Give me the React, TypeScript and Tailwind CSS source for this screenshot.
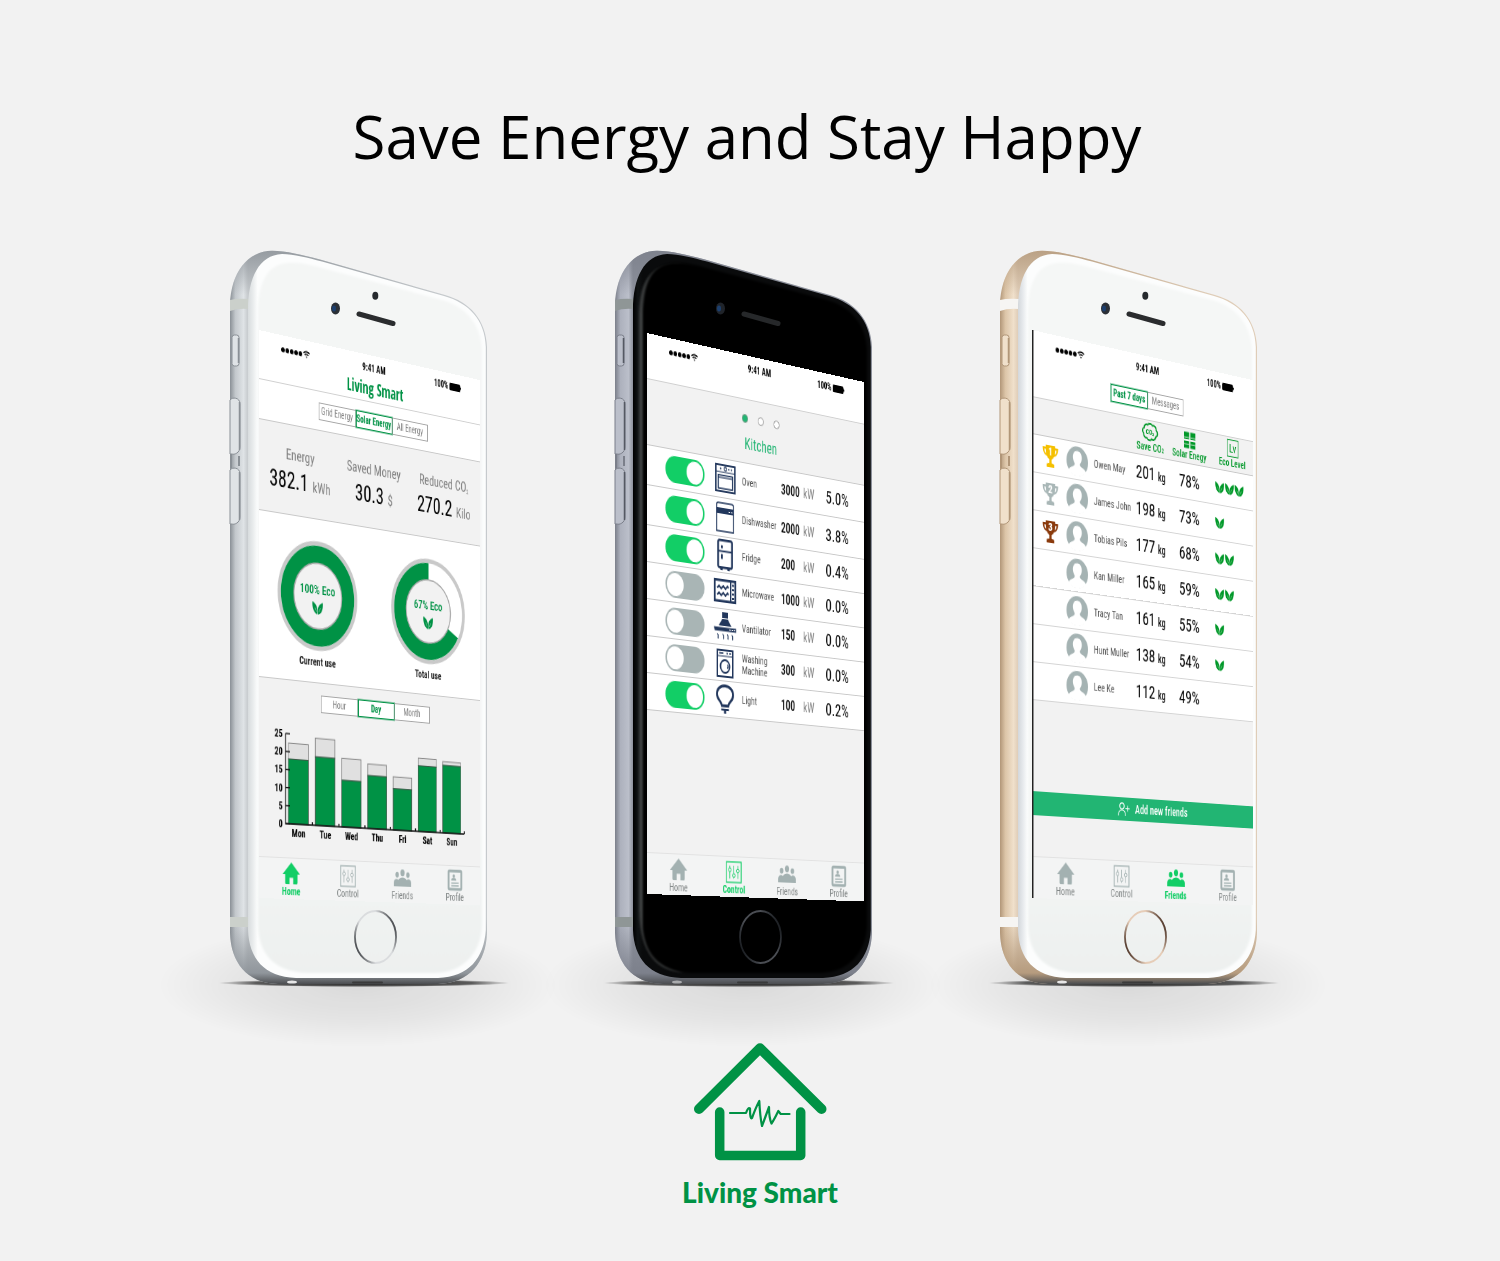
import { ReactNode, useState } from 'react';

type IconProps = { className?: string };

/* ---------- shared icons ---------- */

function Leaf({ className }: IconProps) {
  return (
    <svg viewBox="0 0 20 18" className={className} fill="currentColor" aria-hidden="true">
      <path d="M0 0C6 2 10.500 6 9.500 17.500 3 16.500-1 9 0 0Z" />
      <path d="M20 .5C21 10 17.500 17 10.700 17.500 8.500 8 13 3 20 .5Z" />
      <path d="M5 8.500 8 14M15.500 8.500 12.300 14" stroke="#fff" strokeOpacity=".6" strokeWidth="1" fill="none" />
    </svg>
  );
}

function HomeIcon({ className }: IconProps) {
  return (
    <svg viewBox="0 0 24 22" className={className} fill="currentColor" aria-hidden="true">
      <path d="M12 0 24 12h-3.500v8.500q0 1.500-1.500 1.500h-4.500v-6.500h-5V22H5q-1.500 0-1.500-1.500V12H0Z" />
    </svg>
  );
}

function ControlIcon({ className }: IconProps) {
  return (
    <svg viewBox="0 0 24 24" className={className} fill="none" stroke="currentColor" aria-hidden="true">
      <rect x="1" y="1" width="22" height="22" strokeWidth="1.300" />
      <path d="M6 5v2.500M6 11.500V19M12 5v8.500M12 17.500V19M18 5v3.500M18 12.500V19" />
      <circle cx="6" cy="9.500" r="2" />
      <circle cx="12" cy="15.500" r="2" />
      <circle cx="18" cy="10.500" r="2" />
    </svg>
  );
}

function FriendsIcon({ className }: IconProps) {
  return (
    <svg viewBox="0 0 26 18" className={className} fill="currentColor" aria-hidden="true">
      <ellipse cx="13" cy="3.600" rx="3.100" ry="3.600" />
      <ellipse cx="5" cy="5.800" rx="2.600" ry="3" />
      <ellipse cx="21" cy="5.800" rx="2.600" ry="3" />
      <path d="M0 18v-4c0-2.500 2-3.800 4-3.800 1.200 0 2.200.4 2.800 1C8.300 9.400 10.500 8.500 13 8.500s4.700.9 6.200 2.700c.6-.6 1.600-1 2.800-1 2 0 4 1.300 4 3.800v4Z" />
    </svg>
  );
}

function ProfileIcon({ className }: IconProps) {
  return (
    <svg viewBox="0 0 24 24" className={className} fill="currentColor" aria-hidden="true">
      <rect x="1.800" y="1.800" width="20.400" height="20.400" rx="1.500" fill="none" stroke="currentColor" strokeWidth="3" />
      <circle cx="10" cy="7.500" r="2" />
      <path d="M6 12.500c0-2 1.500-3 4-3s4 1 4 3ZM6 14.500h12V16H6ZM6 17.500h12V19H6Z" />
    </svg>
  );
}

function WifiIcon({ className }: IconProps) {
  return (
    <svg viewBox="0 0 12 9" className={className} fill="none" stroke="currentColor" aria-hidden="true">
      <path d="M.8 3.400C3.800.4 8.200.4 11.200 3.400" strokeWidth="1.600" />
      <path d="M3 5.600c1.700-1.700 4.300-1.700 6 0" strokeWidth="1.500" />
      <path d="M6 9 4.400 7.200h3.200Z" fill="currentColor" stroke="none" />
    </svg>
  );
}

/* ---------- appliance icons ---------- */

function OvenIcon() {
  return (
    <svg viewBox="0 0 30 30" className="h-[29px] w-[29px]" fill="none" stroke="currentColor" aria-hidden="true">
      <rect x="1" y="1" width="28" height="28" strokeWidth="2" />
      <path d="M1 8.500h28" strokeWidth="1" />
      <rect x="4.500" y="12" width="21" height="14" strokeWidth="1.500" />
      <path d="M5 14.500h20" strokeWidth="1.200" />
      <circle cx="8" cy="5" r="1" fill="currentColor" stroke="none" />
      <circle cx="15" cy="5" r="1.900" strokeWidth="1.300" />
      <circle cx="20" cy="5" r="1" fill="currentColor" stroke="none" />
      <circle cx="24" cy="5" r="1" fill="currentColor" stroke="none" />
    </svg>
  );
}

function DishwasherIcon() {
  return (
    <svg viewBox="0 0 26 31" className="h-[31px] w-[26px]" fill="none" stroke="currentColor" aria-hidden="true">
      <path d="M1 30V3.500Q1 1 3.500 1h19Q25 1 25 3.500V30Z" strokeWidth="1.600" />
      <path d="M1 6h24v6H1Z" fill="currentColor" stroke="none" />
      <path d="M18 9.500h2M21.500 9.500h2" stroke="#fff" strokeWidth="1.200" />
    </svg>
  );
}

function FridgeIcon() {
  return (
    <svg viewBox="0 0 22 32" className="h-8 w-[22px]" fill="none" stroke="currentColor" aria-hidden="true">
      <rect x="1.200" y="1.200" width="19.600" height="28" rx="2" strokeWidth="2.400" />
      <path d="M1 12.500h20" strokeWidth="1.800" />
      <path d="M5 6.500h2.800v3H5ZM5 15.500h2.800v5H5ZM4 29h4l-.5 3h-3ZM14 29h4l-.5 3h-3Z" fill="currentColor" stroke="none" />
    </svg>
  );
}

function MicrowaveIcon() {
  return (
    <svg viewBox="0 0 32 24" className="h-6 w-8" fill="none" stroke="currentColor" aria-hidden="true">
      <rect x="1.300" y="1.300" width="29.400" height="21.400" strokeWidth="2.600" />
      <path d="M24 1v22" strokeWidth="2" />
      <path d="M5 9.500 7.500 7l3 3 3-3 3 3 3-3 1.500 1.500M5 16.500 7.500 14l3 3 3-3 3 3 3-3 1.500 1.500" strokeWidth="1.900" />
      <path d="M27.500 4.500v2M27.500 9v2M27.500 13.500v2M27.500 18v2" strokeWidth="3" />
    </svg>
  );
}

function FanIcon() {
  return (
    <svg viewBox="0 0 32 31" className="h-[31px] w-8" fill="none" stroke="currentColor" aria-hidden="true">
      <path d="M12 0h8v6h-8ZM12 7h8l5 7H7ZM0 15.500h32v4H1.500Z" fill="currentColor" stroke="none" />
      <path d="M22 17.500h2M25.500 17.500h2M29 17.500h1.500" stroke="#fff" strokeWidth="1" />
      <path d="M5 22.500c3 1.500 0 3 1.500 5M12.500 22.500c3 1.500 0 3 1.500 5M19 22.500c3 1.500 0 3 1.500 5M25.500 22.500c3 1.500 0 3 1.500 5" strokeWidth="1.300" />
    </svg>
  );
}

function WasherIcon() {
  return (
    <svg viewBox="0 0 24 29" className="h-[29px] w-6" fill="none" stroke="currentColor" aria-hidden="true">
      <rect x="1" y="1" width="22" height="27" strokeWidth="2" />
      <path d="M1 7h22" strokeWidth="1" />
      <path d="M3.500 4h6M14 4h2M18 4h2.500" strokeWidth="1.500" />
      <ellipse cx="12" cy="17.500" rx="6.500" ry="6.500" strokeWidth="2" />
      <path d="M15.500 15.500q1.500 2-.2 4" strokeWidth="1.200" />
    </svg>
  );
}

function BulbIcon() {
  return (
    <svg viewBox="0 0 28 30" className="h-[30px] w-7" fill="none" stroke="currentColor" aria-hidden="true">
      <path d="M14 1.500c7 0 11.500 4 11.500 9 0 6-6.500 6.500-7 11.500h-9c-.5-5-7-5.500-7-11.500 0-5 4.500-9 11.500-9Z" strokeWidth="2.800" />
      <path d="M8.500 25h11v2h-4v3h-3v-3h-4Z" fill="currentColor" stroke="none" />
    </svg>
  );
}

/* ---------- friends icons ---------- */

function Trophy({ place, className }: { place: number; className: string }) {
  return (
    <svg viewBox="0 0 20 21" className={className} aria-label={`Place ${place}`} role="img">
      <path d="M4 0h12v2h4c0 5-2 8-5.500 8.500-.8 1.800-2 2.500-3 2.800V17l3.500.8V21H5v-3.200L8.500 17v-3.700c-1-.3-2.200-1-3-2.800C2 10 0 7 0 2h4Zm0 4H2c.3 2 1 3.500 2.500 4.200Zm12 0-.5 4.200C17 7.500 17.700 6 18 4Z" fill="currentColor" />
      <text x="10" y="10" textAnchor="middle" fontSize="11" fontWeight="800" fill="#fff">
        {place}
      </text>
    </svg>
  );
}

function Avatar() {
  return (
    <svg viewBox="0 0 30 30" className="h-[30px] w-[30px]" aria-hidden="true">
      <circle cx="15" cy="15" r="15" fill="#a5b3b3" />
      <path d="M15 4.500c4.500 0 6.500 3.500 6.100 7.500-.3 2.600-1.600 4.500-2.500 5.500 0 1.800.9 2.500 3.400 3.400 2.700 1 4.500 2 5 4.100A15 15 0 0 1 15 30 15 15 0 0 1 3 25c.5-2.100 2.300-3.100 5-4.100 2.500-.9 3.400-1.600 3.400-3.400-.9-1-2.200-2.900-2.500-5.500-.4-4 1.600-7.500 6.100-7.500Z" fill="#fff" />
    </svg>
  );
}

function CloudIcon() {
  return (
    <svg viewBox="0 0 24 20" className="h-5 w-6" aria-hidden="true">
      <path d="M8 2.500c2-2.500 6-2 7 0 3-1 6 1 5.500 4 3 2 2.500 6-.5 7-.5 3-4 4.500-6 3-2 2.500-6 2-7-.5-3 .5-5-1.500-4.500-4C-.2 10 .5 6.500 3 6 3 3 5.500 1.500 8 2.500Z" fill="none" stroke="currentColor" strokeWidth="1.700" />
      <text x="11.500" y="12.500" textAnchor="middle" fontSize="8" fontWeight="700" fill="currentColor">
        CO₂
      </text>
    </svg>
  );
}

function SolarIcon() {
  return (
    <svg viewBox="0 0 18 18" className="h-[18px] w-[17px]" fill="currentColor" aria-hidden="true">
      <path d="M0 0h8v8H0ZM10 0h8v8h-8ZM0 10h8v8H0ZM10 10h8v8h-8Z" />
      <path d="M0 6h8M10 6h8M0 13.500h8M10 13.500h8" stroke="#f2f2f2" strokeWidth=".8" />
    </svg>
  );
}

function LevelIcon() {
  return (
    <svg viewBox="0 0 18 19" className="h-[19px] w-[18px]" aria-hidden="true">
      <rect x=".6" y=".6" width="16.800" height="17.800" fill="none" stroke="currentColor" strokeWidth="1" />
      <text x="9" y="14" textAnchor="middle" fontSize="13" fill="currentColor">
        Lv
      </text>
    </svg>
  );
}

function AddUserIcon() {
  return (
    <svg viewBox="0 0 17 14" className="h-[14px] w-[17px]" fill="none" stroke="currentColor" strokeWidth="1.200" aria-hidden="true">
      <circle cx="6" cy="4" r="3.200" />
      <path d="M1 14c0-3 1.500-6 5-6s5 3 5 6M11 6.500h6M14 3.500v6" />
    </svg>
  );
}

/* ---------- screen parts ---------- */

function StatusBar() {
  return (
    <div className="grid grid-cols-3 items-center px-[30px] pt-2 text-[10px] leading-3 font-bold text-black">
      <span className="flex items-center gap-px">
        {[0, 1, 2, 3, 4].map((n) => (
          <span key={n} className="size-[5px] rounded-full bg-black" />
        ))}
        <WifiIcon className="h-2 w-[10px]" />
      </span>
      <span className="text-center whitespace-nowrap">9:41 AM</span>
      <span className="flex items-center justify-end gap-0.5">
        100%
        <svg viewBox="0 0 18 8" className="h-2 w-[18px]" aria-hidden="true">
          <path d="M1.500 0H15q1.500 0 1.500 1.500v1Q18 2.500 18 4t-1.500 1.500v1Q16.500 8 15 8H1.500Q0 8 0 6.500v-5Q0 0 1.500 0Z" />
        </svg>
      </span>
    </div>
  );
}

function Segments({ items, initial, label }: { items: string[]; initial: number; label: string }) {
  const [active, setActive] = useState(initial);
  return (
    <div className="flex justify-center" role="group" aria-label={label}>
      {items.map((item, n) => (
        <button
          key={item}
          type="button"
          aria-pressed={n === active}
          onClick={() => setActive(n)}
          className={
            n === active
              ? 'h-[18px] w-[53px] border border-[#009245] bg-white text-[10px] leading-4 font-bold whitespace-nowrap text-[#009245] outline outline-[#009245]/40'
              : 'h-[18px] w-[53px] border border-[#a6a6a6] bg-white text-[10px] leading-4 whitespace-nowrap text-[#808080]'
          }
        >
          {item}
        </button>
      ))}
    </div>
  );
}

const tabs = [
  { name: 'Home', Icon: HomeIcon, size: 'h-[22px] w-[26px]' },
  { name: 'Control', Icon: ControlIcon, size: 'h-[23px] w-[23px]' },
  { name: 'Friends', Icon: FriendsIcon, size: 'h-[18px] w-[26px]' },
  { name: 'Profile', Icon: ProfileIcon, size: 'h-[24px] w-[23px]' },
];

function TabBar({ active }: { active: string }) {
  return (
    <nav className="mt-auto grid h-[42px] grid-cols-4 border-t border-[#e2e2e2] bg-[#f3f4f4] pl-1">
      {tabs.map(({ name, Icon, size }) => (
        <a key={name} href={`#${name.toLowerCase()}`} className="flex flex-col items-center pt-0.5">
          <span className={`flex h-[26px] items-center ${name === active ? 'text-[#12ce66]' : 'text-[#a3b1b1]'}`}>
            <Icon className={size} />
          </span>
          <span className={`text-[11px] leading-3 ${name === active ? 'font-bold text-[#12ce66]' : 'text-[#808585]'}`}>
            {name}
          </span>
        </a>
      ))}
    </nav>
  );
}

/* ---------- home screen ---------- */

function Donut({ percent, caption }: { percent: number; caption: string }) {
  const length = 2 * Math.PI * 42;
  return (
    <figure className="flex flex-col items-center">
      <div className="relative size-28">
        <svg viewBox="0 0 112 112" className="size-28" aria-hidden="true">
          <circle cx="56" cy="56" r="53.500" fill="#fff" stroke="#c9c9c9" strokeWidth="4.500" />
          <circle
            cx="56"
            cy="56"
            r="42"
            fill="none"
            stroke="#009245"
            strokeWidth="18.500"
            strokeDasharray={`${(length * percent) / 100} ${length}`}
            transform="rotate(-90 56 56) scale(1 -1) translate(0 -112)"
          />
          <circle cx="56" cy="56" r="33.500" fill="#f2f2f2" stroke="#a8a8a8" strokeWidth="1.500" />
        </svg>
        <div className="absolute inset-0 flex flex-col items-center justify-center gap-1 pt-1 text-[13px] leading-4 font-medium text-[#009245]">
          {percent}% Eco
          <Leaf className="h-[13px] w-[19px]" />
        </div>
      </div>
      <figcaption className="mt-1 text-[11px] leading-4 font-bold text-[#222]">{caption}</figcaption>
    </figure>
  );
}

const week = [
  { day: 'Mon', total: 22.4, green: 18 },
  { day: 'Tue', total: 24.4, green: 19.2 },
  { day: 'Wed', total: 19.4, green: 13.2 },
  { day: 'Thu', total: 18.4, green: 15.1 },
  { day: 'Fri', total: 15.3, green: 11.9 },
  { day: 'Sat', total: 21.3, green: 19.1 },
  { day: 'Sun', total: 20.9, green: 19.8 },
];

function WeekChart() {
  const scale = 91 / 25;
  const pitch = 261 / 7;
  return (
    <svg viewBox="0 0 322 122" className="w-full" role="img" aria-label="Energy use by day" fontSize="11" fontWeight="700">
      {week.map((d, n) => {
        const x = 40 + n * pitch;
        return (
          <g key={d.day}>
            <rect x={x} y={101 - d.total * scale} width="27.500" height={(d.total - d.green) * scale} fill="#e0e0e0" stroke="#888" />
            <rect x={x} y={101 - d.green * scale} width="27.500" height={d.green * scale} fill="#009245" stroke="#3c5a48" />
            <path d={`M${36 + (n + 1) * pitch} 101v-3`} stroke="#000" strokeWidth="1.500" />
            <text x={x + 14} y="114" textAnchor="middle">
              {d.day}
            </text>
          </g>
        );
      })}
      <path d="M36 10V101H297" fill="none" stroke="#111" strokeWidth="1.300" />
      {[0, 5, 10, 15, 20, 25].map((v) => (
        <g key={v}>
          <path d={`M36 ${101 - v * scale}h6`} stroke="#111" strokeWidth="1.300" />
          <text x="32" y={105 - v * scale} textAnchor="end">
            {v}
          </text>
        </g>
      ))}
    </svg>
  );
}

function Metric({ label, value, unit }: { label: ReactNode; value: string; unit: string }) {
  return (
    <div className="flex flex-col items-center whitespace-nowrap">
      <dt className="text-[15px] leading-6 text-[#808080]">{label}</dt>
      <dd className="text-[24px] leading-7 text-black">
        {value} <span className="text-[15px] text-[#808080]">{unit}</span>
      </dd>
    </div>
  );
}

function HomeScreen() {
  return (
    <>
      <header className="h-[49px] border-b border-[#d0d0d0] bg-white">
        <StatusBar />
        <h2 className="mt-1 pl-1 text-center font-['Open_Sans_Condensed','Roboto_Condensed',sans-serif] text-[17px] leading-[22px] font-extrabold text-[#009245]">
          Living Smart
        </h2>
      </header>
      <div className="h-10 border-b border-[#c8c8c8] bg-white pt-[11px]">
        <Segments label="Energy source" items={['Grid Energy', 'Solar Energy', 'All Energy']} initial={1} />
      </div>
      <dl className="grid h-[91px] grid-cols-3 border-b border-[#c8c8c8] px-1 pt-[18px]">
        <Metric label="Energy" value="382.1" unit="kWh" />
        <Metric label="Saved Money" value="30.3" unit="$" />
        <Metric
          label={
            <>
              Reduced CO<sub className="text-[7px]">2</sub>
            </>
          }
          value="270.2"
          unit="Kilo"
        />
      </dl>
      <div className="grid h-[167px] grid-cols-2 border-b border-[#c8c8c8] bg-white pt-[22px]">
        <Donut percent={100} caption="Current use" />
        <Donut percent={67} caption="Total use" />
      </div>
      <div className="pt-3">
        <div className="pl-1.5">
          <Segments label="Period" items={['Hour', 'Day', 'Month']} initial={1} />
        </div>
        <div className="mt-3.5">
          <WeekChart />
        </div>
      </div>
      <TabBar active="Home" />
    </>
  );
}

/* ---------- control screen ---------- */

const appliances = [
  { name: 'Oven', power: 3000, share: '5.0%', on: true, Icon: OvenIcon, row: 'h-10' },
  { name: 'Dishwasher', power: 2000, share: '3.8%', on: true, Icon: DishwasherIcon, row: 'h-10' },
  { name: 'Fridge', power: 200, share: '0.4%', on: true, Icon: FridgeIcon, row: 'h-[37px]' },
  { name: 'Microwave', power: 1000, share: '0.0%', on: false, Icon: MicrowaveIcon, row: 'h-[37px]' },
  { name: 'Vantilator', power: 150, share: '0.0%', on: false, Icon: FanIcon, row: 'h-[37px]' },
  { name: 'Washing Machine', power: 300, share: '0.0%', on: false, Icon: WasherIcon, row: 'h-[37px]' },
  { name: 'Light', power: 100, share: '0.2%', on: true, Icon: BulbIcon, row: 'h-[37px]' },
];

function ControlScreen() {
  return (
    <>
      <header className="h-[46px] border-b border-[#d0d0d0] bg-white">
        <StatusBar />
      </header>
      <div className="flex h-[66px] flex-col items-center border-b border-[#c8c8c8] pt-[15px] pl-1">
        <div className="flex gap-[14px]">
          <span className="size-[9px] rounded-full border border-[#7d9a8a] bg-[#22b573]" />
          <span className="size-[9px] rounded-full border border-[#999] bg-white" />
          <span className="size-[9px] rounded-full border border-[#999] bg-white" />
        </div>
        <h2 className="mt-3 text-[16px] leading-5 text-[#22b573]">Kitchen</h2>
      </div>
      <ul>
        {appliances.map(({ name, power, share, on, Icon, row }) => (
          <li key={name} className={`${row} border-b border-[#c8c8c8] bg-white`}>
            <label className="flex h-full items-center pl-[25px]">
              <input
                type="checkbox"
                role="switch"
                defaultChecked={on}
                className="relative h-[27px] w-[54px] shrink-0 appearance-none rounded-full bg-[#a9b5b5] before:absolute before:top-0.5 before:left-0.5 before:size-[23px] before:rounded-full before:bg-white checked:bg-[#12ce66] checked:before:left-[29px]"
              />
              <span className="ml-[11px] flex w-9 shrink-0 justify-center text-[#22375c]">
                <Icon />
              </span>
              <span className="ml-1.5 w-[57px] text-[11px] leading-3 text-[#4d4d4d]">{name}</span>
              <span className="w-[33px] text-[14px] leading-5 font-medium text-black">{power}</span>
              <span className="w-[34px] text-[14px] leading-5 text-[#808080]">kW</span>
              <span className="text-[19px] leading-6 text-black">{share}</span>
            </label>
          </li>
        ))}
      </ul>
      <TabBar active="Control" />
    </>
  );
}

/* ---------- friends screen ---------- */

const friends = [
  { name: 'Owen May', saved: 201, solar: 78, level: 3 },
  { name: 'James John', saved: 198, solar: 73, level: 1 },
  { name: 'Tobias Pils', saved: 177, solar: 68, level: 2 },
  { name: 'Kan Miller', saved: 165, solar: 59, level: 2 },
  { name: 'Tracy Tan', saved: 161, solar: 55, level: 1 },
  { name: 'Hunt Muller', saved: 138, solar: 54, level: 1 },
  { name: 'Lee Ke', saved: 112, solar: 49, level: 0 },
];

const medals = ['h-[22px] w-[22px] text-[#f5c000]', 'h-[22px] w-[22px] text-[#a9b7b7]', 'h-[22px] w-[22px] text-[#8a3a0c]'];

function Heading({ icon, children }: { icon: ReactNode; children: ReactNode }) {
  return (
    <span className="flex flex-col items-center">
      <span className="flex h-[19px] items-center">{icon}</span>
      <span className="text-[11px] leading-[14px] font-medium whitespace-nowrap">{children}</span>
    </span>
  );
}

function FriendsScreen() {
  return (
    <>
      <header className="h-[67px] border-b border-[#d0d0d0] bg-white">
        <StatusBar />
        <div className="mt-[17px]">
          <Segments label="View" items={['Past 7 days', 'Messages']} initial={0} />
        </div>
      </header>
      <table className="w-full table-fixed border-collapse">
        <thead>
          <tr className="h-9 border-b border-[#c8c8c8] align-top text-[#009828]">
            <th className="w-[41px] p-0" aria-label="Rank" />
            <th className="w-[36px] p-0" aria-label="Photo" />
            <th className="w-[62px] p-0" aria-label="Name" />
            <th className="w-[50px] p-0 pt-0.5 font-normal">
              <Heading icon={<CloudIcon />}>
                Save CO<span className="text-[7px]">2</span>
              </Heading>
            </th>
            <th className="w-[66px] p-0 pt-0.5 font-normal">
              <Heading icon={<SolarIcon />}>Solar Enegy</Heading>
            </th>
            <th className="p-0 pt-0.5 font-normal">
              <Heading icon={<LevelIcon />}>Eco Level</Heading>
            </th>
          </tr>
        </thead>
        <tbody>
          {friends.map((f, n) => (
            <tr key={f.name} className="h-[38px] border-b border-[#d4d4d4] bg-white">
              <td className="p-0 pl-3">{n < 3 && <Trophy place={n + 1} className={medals[n]} />}</td>
              <td className="p-0 pl-1">
                <Avatar />
              </td>
              <td className="p-0 pl-1.5 text-[11px] leading-4 whitespace-nowrap text-[#4d4d4d]">{f.name}</td>
              <td className="p-0 pl-1 text-[19px] leading-6 whitespace-nowrap text-black">
                {f.saved}
                <span className="ml-1 text-[12px] font-medium">kg</span>
              </td>
              <td className="p-0 text-center text-[19px] leading-6 text-black">{f.solar}%</td>
              <td className="p-0 pl-1.5">
                <span className="flex gap-px text-[#009828]" role="img" aria-label={`Level ${f.level}`}>
                  {Array.from({ length: f.level }, (_, k) => (
                    <Leaf key={k} className="h-3 w-[14px]" />
                  ))}
                </span>
              </td>
            </tr>
          ))}
        </tbody>
      </table>
      <button type="button" className="mt-[91px] flex h-6 items-center justify-center gap-2 bg-[#22b573] pl-4 text-[12px] leading-4 font-medium text-white">
        <AddUserIcon />
        Add new friends
      </button>
      <TabBar active="Friends" />
    </>
  );
}

/* ---------- device ---------- */

type Finish = {
  id: string;
  side: [string, string, string, string];
  band: string;
  rim: [string, string, string];
  face: [string, string];
  home: [string, string];
  speaker: string;
  dark?: boolean;
};

const silver: Finish = {
  id: 'silver',
  side: ['#8a9096', '#c3c8cc', '#dfe3e6', '#c6cacd'],
  band: '#cbd0cb',
  rim: ['#d8dcde', '#e8ebec', '#fcfdfd'],
  face: ['#f4f6f5', '#edf0ef'],
  home: ['#33363a', '#dadcde'],
  speaker: '#2a2c2e',
};

const gray: Finish = {
  id: 'gray',
  side: ['#7b7f8a', '#adb1bd', '#bbbfca', '#8c909b'],
  band: '#8f9696',
  rim: ['#000000', '#101314', '#0a0b0c'],
  face: ['#000000', '#000000'],
  home: ['#15181c', '#4a4d53'],
  speaker: '#26282a',
  dark: true,
};

const gold: Finish = {
  id: 'gold',
  side: ['#b19678', '#dcc5a8', '#f0e0cb', '#dfcdb8'],
  band: '#f6f5f3',
  rim: ['#d3d7db', '#e6e9ec', '#fcfdfd'],
  face: ['#f5f7f6', '#edf0ef'],
  home: ['#3d2418', '#e6cdb8'],
  speaker: '#2a2c2e',
};

const OUTLINE =
  'M0 55C1 22 18 1 42 .8 56 .8 72 5 90 9.500L215 45C240 52 256 70 257 97V683C256 712 240 733 208 734H48C16 733 1 712 0 683Z';
const FRONT =
  'M18 60C18 28 29 5 52 4 64 4 78 8 92 11.500L214 46C239 53 255 70 255.800 97V680C254 708 239 727 208 728H66C34 727 19 708 18 680Z';
const INNER =
  'M28 64C28 34 36 16 56 13 68 12 78 14 92 18L212 50C236 57 251 74 252 100V676C251 702 234 722 206 723H76C42 721 29 702 28 676Z';

function Body({ finish }: { finish: Finish }) {
  const { id, side, band, rim, face, home, speaker, dark } = finish;
  return (
    <svg viewBox="0 0 257 735" className="absolute inset-0 size-full overflow-visible" aria-hidden="true">
      <defs>
        <linearGradient id={`${id}-side`} x1="0" x2="18" y1="0" y2="0" gradientUnits="userSpaceOnUse">
          <stop offset="0" stopColor={side[0]} />
          <stop offset=".3" stopColor={side[1]} />
          <stop offset=".75" stopColor={side[2]} />
          <stop offset="1" stopColor={side[3]} />
        </linearGradient>
        <linearGradient id={`${id}-ends`} x1="0" x2="0" y1="0" y2="1">
          <stop offset="0" stopColor={side[0]} stopOpacity=".8" />
          <stop offset=".06" stopColor={side[0]} stopOpacity="0" />
          <stop offset=".91" stopColor={side[0]} stopOpacity="0" />
          <stop offset=".985" stopColor={side[0]} stopOpacity=".9" />
          <stop offset="1" stopColor="#4b4d50" />
        </linearGradient>
        <linearGradient id={`${id}-face`} x1="0" x2="0" y1="0" y2="1">
          <stop offset="0" stopColor={face[0]} />
          <stop offset=".8" stopColor={face[0]} />
          <stop offset="1" stopColor={face[1]} />
        </linearGradient>
        <linearGradient id={`${id}-rim`} x1="18" x2="34" y1="0" y2="0" gradientUnits="userSpaceOnUse">
          <stop offset="0" stopColor={rim[0]} />
          <stop offset=".3" stopColor={rim[1]} />
          <stop offset=".6" stopColor={rim[2]} />
          <stop offset="1" stopColor={rim[2]} />
        </linearGradient>
        <linearGradient id={`${id}-home`} x1="0" x2="1" y1=".75" y2=".25">
          <stop offset="0" stopColor={home[0]} />
          <stop offset=".3" stopColor={home[1]} />
          <stop offset=".7" stopColor={home[1]} />
          <stop offset="1" stopColor={home[0]} />
        </linearGradient>
        <radialGradient id={`${id}-floor`}>
          <stop offset="0" stopColor="#000" stopOpacity=".1" />
          <stop offset=".6" stopColor="#000" stopOpacity=".05" />
          <stop offset="1" stopColor="#000" stopOpacity="0" />
        </radialGradient>
        <radialGradient id={`${id}-contact`}>
          <stop offset="0" stopColor="#000" stopOpacity=".9" />
          <stop offset=".75" stopColor="#000" stopOpacity=".6" />
          <stop offset="1" stopColor="#000" stopOpacity="0" />
        </radialGradient>
        <filter id={`${id}-soft`} x="-10%" y="-10%" width="120%" height="120%">
          <feGaussianBlur stdDeviation="1.300" />
        </filter>
      </defs>

      <ellipse cx="128" cy="735" rx="200" ry="62" fill={`url(#${id}-floor)`} />
      <ellipse cx="134" cy="733" rx="146" ry="4" fill={`url(#${id}-contact)`} />

      <path d={OUTLINE} fill={`url(#${id}-side)`} />
      <path d={OUTLINE} fill={`url(#${id}-ends)`} />
      <path d="M0 50Q8 48 19 49V59Q8 58 0 61ZM0 667H19V677H0Z" fill={band} />

      <g fill={side[2]} stroke={side[0]} strokeWidth="1">
        <rect x="2" y="85" width="7" height="31" rx="2.500" />
        <path d="M0 150C2 147 10 147 10 154V197C10 203 4 205 2 204H0ZM0 220C2 217 10 217 10 224V267C10 273 4 275 2 274H0Z" />
      </g>
      <path d="M9.500 152V200M9.500 222V270M8.500 88V113" stroke={dark ? '#555963' : side[0]} strokeWidth="1.500" />
      <path d="M1 204V218M9 206V216" stroke={side[0]} strokeWidth="2" />

      <path d={FRONT} fill={`url(#${id}-rim)`} />
      {dark && (
        <path
          d="M24 660V70C24 36 32 16 60 14 70 14 78 18 84 19 50 17 34 28 29 62V680C36 706 52 718 70 722 44 722 25 706 24 660Z"
          fill="#4a4e4e"
          fillOpacity=".8"
          filter={`url(#${id}-soft)`}
        />
      )}
      <path d={INNER} fill={`url(#${id}-face)`} filter={`url(#${id}-soft)`} />

      <ellipse cx="105.500" cy="58.500" rx="4.500" ry="6" fill={dark ? '#20242a' : '#2b3036'} />
      <ellipse cx="104" cy="58.500" rx="2" ry="3" fill="#1c3f6e" />
      {!dark && <ellipse cx="145.300" cy="45.700" rx="3" ry="4" fill="#25292d" />}
      <path d="M129 64 163 73.500" stroke={speaker} strokeWidth="5" strokeLinecap="round" />
      <ellipse cx="145.500" cy="687" rx="20.500" ry="26" fill="none" stroke={`url(#${id}-home)`} strokeWidth="1.800" />

      <ellipse cx="62" cy="732" rx="5" ry="1.600" fill="#fff" fillOpacity={dark ? '.5' : '.85'} />
      <rect x="122" y="731.500" width="31" height="2" rx="1" fill="#333" fillOpacity=".8" />
    </svg>
  );
}

/* The display stands turned away from the viewer; its eye line lies just below the phone's foot. */
function Phone({ finish, screen, children }: { finish: Finish; screen: string; children: ReactNode }) {
  return (
    <article className="relative h-[735px] w-[257px] shrink-0 [perspective-origin:30px_745px] [perspective:2640px]">
      <Body finish={finish} />
      <div className={`flex origin-left flex-col overflow-hidden bg-[#f2f2f2] [transform:rotateY(42deg)] ${screen}`}>{children}</div>
    </article>
  );
}

function BrandMark() {
  return (
    <svg viewBox="0 0 134 120" className="h-[120px] w-[134px]" fill="none" stroke="#009245" strokeLinecap="round" strokeLinejoin="round" aria-hidden="true">
      <path d="M6 67 67 6.300 128.500 67" strokeWidth="10" />
      <path d="M26.700 70V113.500H107.700V70" strokeWidth="9.500" />
      <path d="M37 71H53Q55 65 57 66.500 57 78 59 76 63 65 66.300 59 67 74 69 84 72 76 76 65 76 76 78.500 81.500 81 78 85.300 69L87.700 72H96.500" strokeWidth="2.200" />
    </svg>
  );
}

export default function App() {
  return (
    <main className="min-h-screen bg-[#f2f2f2] pt-24 pb-12 font-['Roboto_Condensed','Roboto',sans-serif]">
      <h1 className="pr-1.5 text-center font-['Open_Sans',sans-serif] text-[60px] leading-[80px] text-black">Save Energy and Stay Happy</h1>
      <section className="mt-[74px] flex justify-center gap-32 pr-[13px]">
        <Phone finish={silver} screen="ml-[29px] mt-20 h-[568px] w-[322px]">
          <HomeScreen />
        </Phone>
        <Phone finish={gray} screen="ml-8 mt-[83px] h-[561px] w-[315px]">
          <ControlScreen />
        </Phone>
        <Phone finish={gold} screen="ml-8 mt-20 h-[568px] w-[322px] border-l-2 border-[#222]">
          <FriendsScreen />
        </Phone>
      </section>
      <footer className="mt-[57px] flex flex-col items-center pl-5">
        <BrandMark />
        <p className="mt-3 font-['Lato',sans-serif] text-[28px] leading-9 font-black text-[#009245]">Living Smart</p>
      </footer>
    </main>
  );
}
